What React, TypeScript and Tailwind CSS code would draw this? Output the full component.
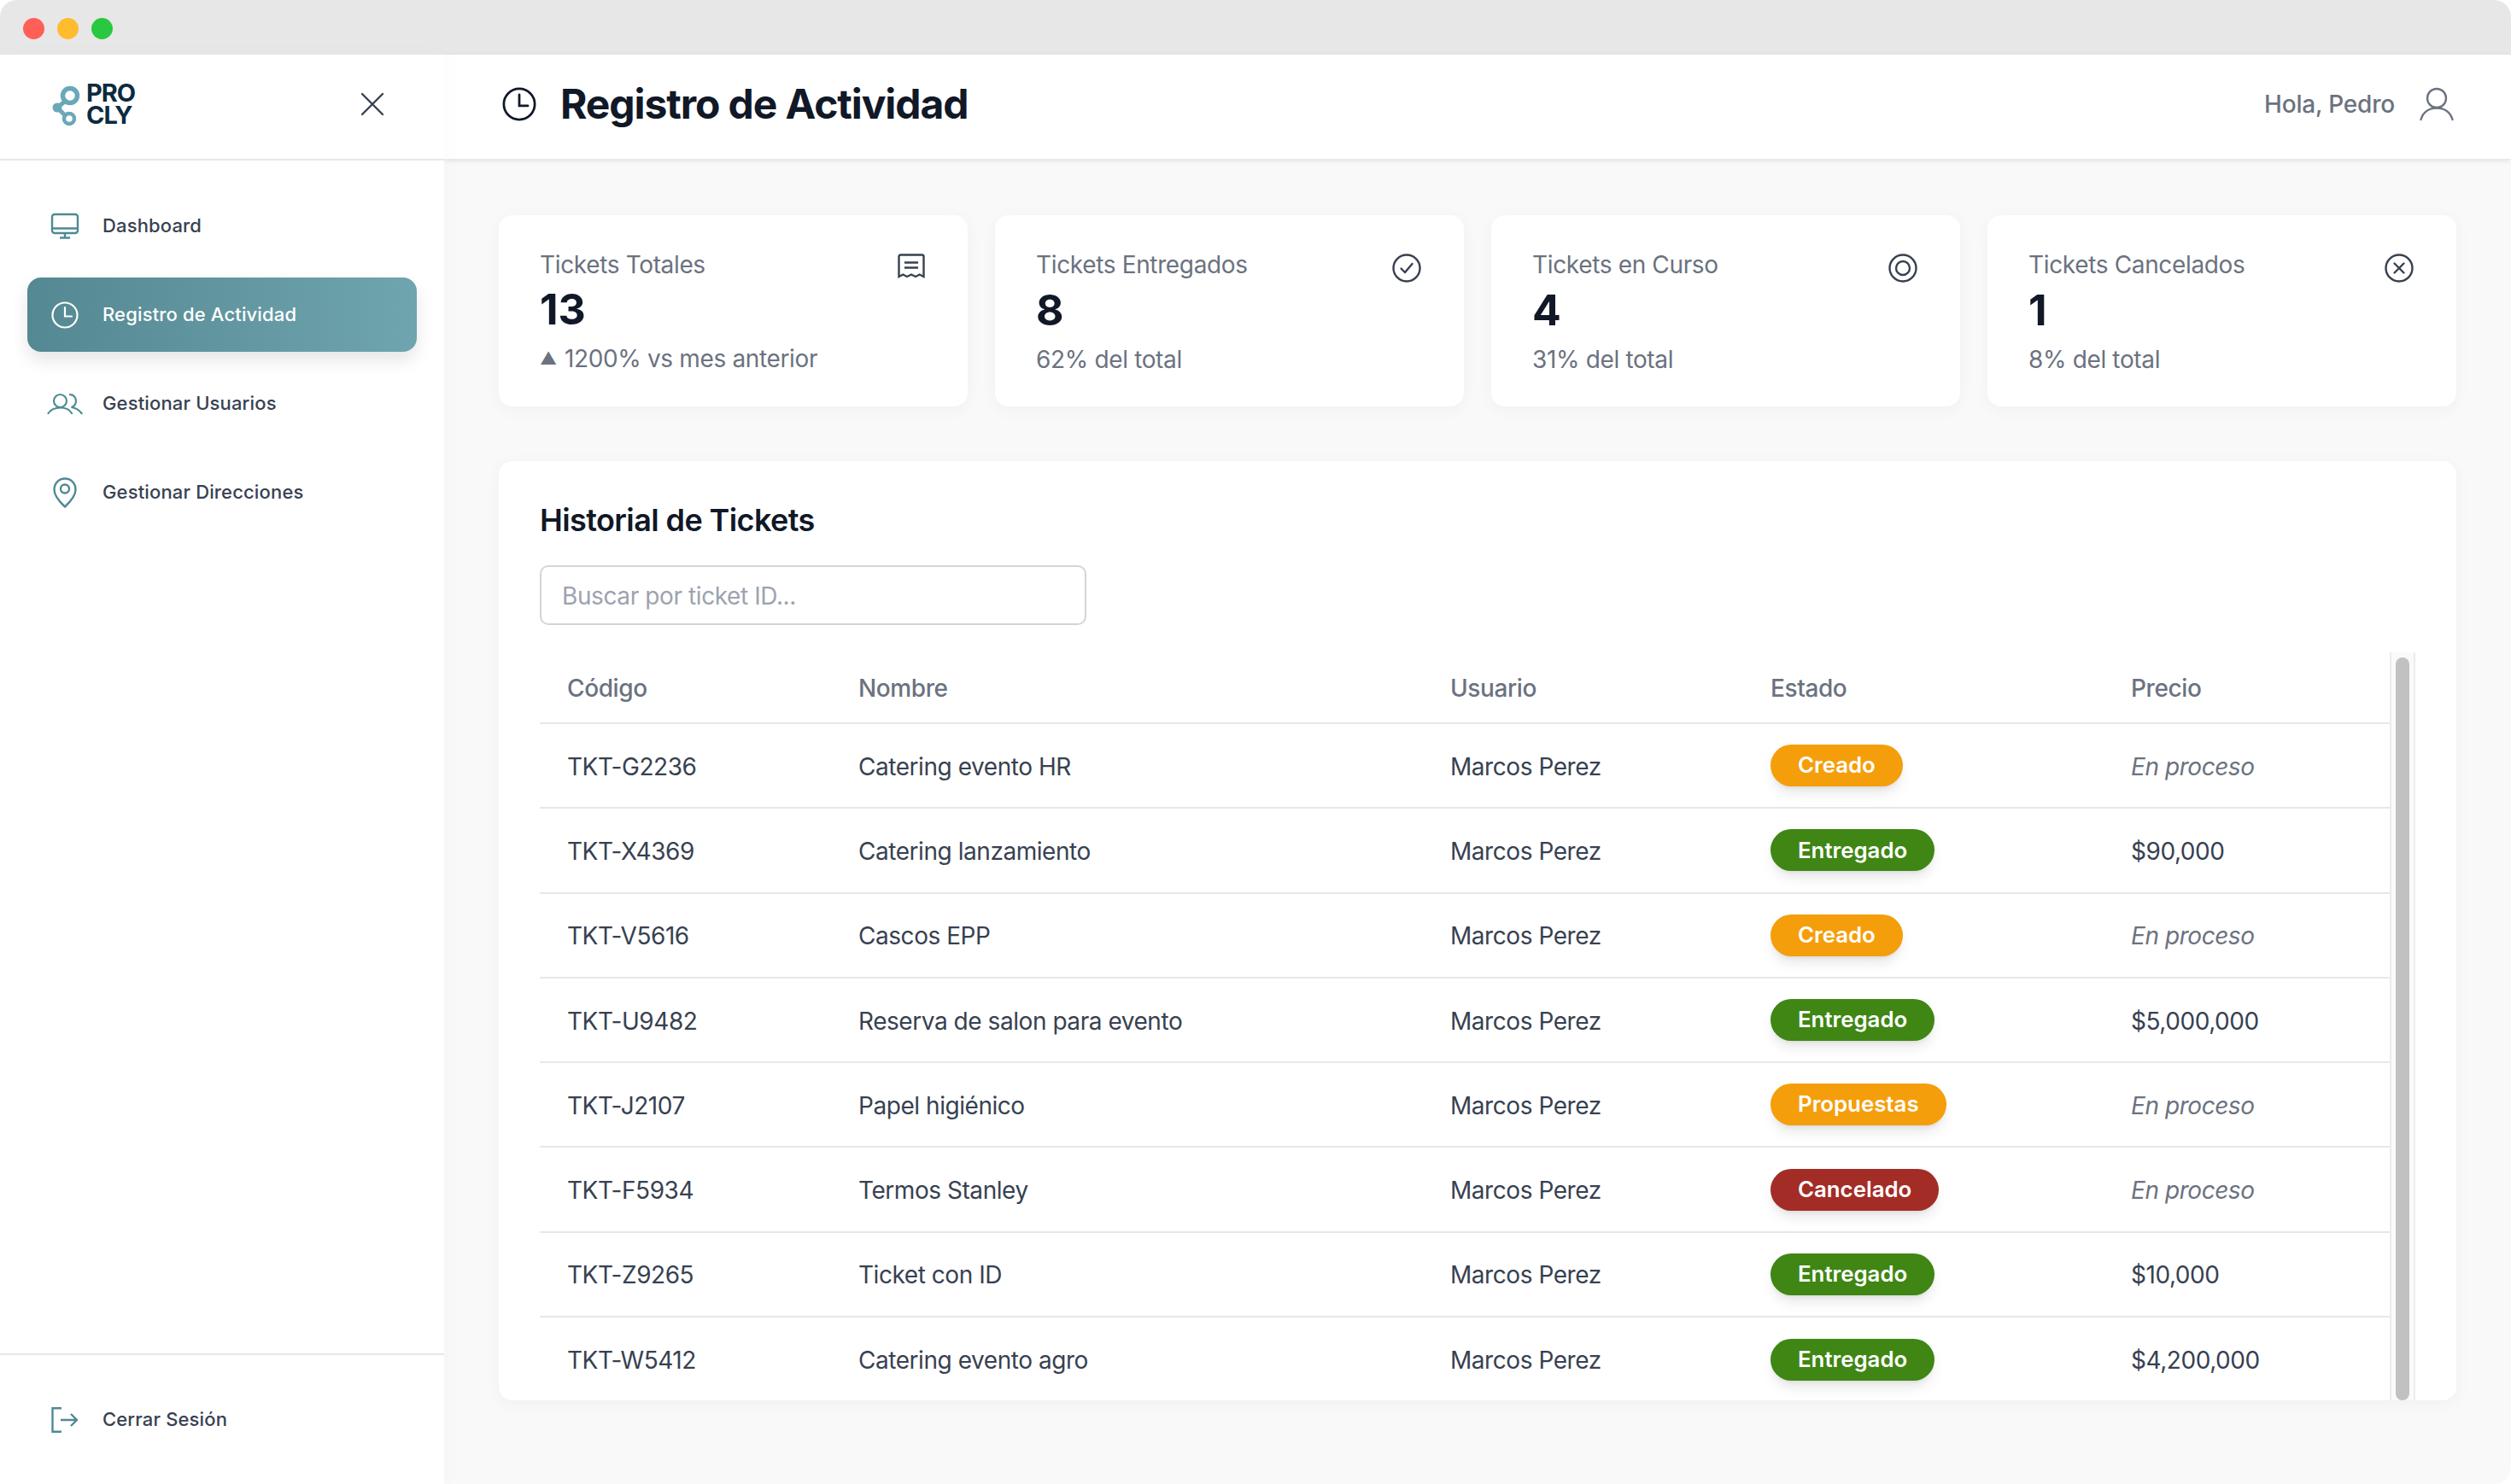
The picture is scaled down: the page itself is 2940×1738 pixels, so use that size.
import React from 'react';

const teal = '#4f8a94';

const Logo = () => (
  <svg width="34" height="50" viewBox="60 96 34 50" fill="none" stroke="#69a8b9">
    <circle cx="82" cy="111" r="8.5" strokeWidth="5.5" />
    <circle cx="81" cy="138" r="6" strokeWidth="4.5" />
    <circle cx="67" cy="125" r="5.5" fill="#69a8b9" stroke="none" />
    <path d="M67 125L77 117M67 125L76 134" strokeWidth="5" />
  </svg>
);

const MonitorIcon = () => (
  <svg width="34" height="32" viewBox="0 0 34 32" fill="none" stroke={teal} strokeWidth="2.4">
    <rect x="2" y="2" width="30" height="22" rx="3" />
    <path d="M2 18.5H32M17 24V29M11 29.5H23" />
  </svg>
);

const ClockIcon = ({ size = 32, color = 'currentColor', width = 2.2 }: { size?: number; color?: string; width?: number }) => (
  <svg width={size} height={size} viewBox="0 0 32 32" fill="none" stroke={color} strokeWidth={width} strokeLinecap="round">
    <circle cx="16" cy="16" r="14.5" />
    <path d="M16 7V17.5H24" />
  </svg>
);

const UsersIcon = () => (
  <svg width="42" height="26" viewBox="0 0 42 26" fill="none" stroke={teal} strokeWidth="2.2" strokeLinecap="round">
    <circle cx="15.5" cy="9.5" r="7.5" />
    <path d="M1.5 24C4.5 19.5 9 17.5 15.5 17.5C22 17.5 26.5 19.5 29 24" />
    <path d="M27 2.2C31 2.2 34 5.5 34 9.5C34 13 31.5 16 28.5 17C33.5 17.5 37.5 20 40.5 24" />
  </svg>
);

const PinIcon = () => (
  <svg width="28" height="36" viewBox="0 0 28 36" fill="none" stroke={teal} strokeWidth="2.4" strokeLinejoin="round">
    <path d="M14 34.5C6.5 27.5 1.5 21.5 1.5 14.5C1.5 7 7 1.5 14 1.5C21 1.5 26.5 7 26.5 14.5C26.5 21.5 21.5 27.5 14 34.5Z" />
    <circle cx="14" cy="13.5" r="5" />
  </svg>
);

const LogoutIcon = () => (
  <svg width="32" height="30" viewBox="0 0 32 30" fill="none" stroke={teal} strokeWidth="2.4">
    <path d="M12 1.2H1.5V28.8H12" />
    <path d="M11 15H30M23 8L30 15L23 22" />
  </svg>
);

const CloseIcon = () => (
  <svg width="28" height="28" viewBox="0 0 28 28" fill="none" stroke="#374151" strokeWidth="2.4" strokeLinecap="round">
    <path d="M2 2L26 26M26 2L2 26" />
  </svg>
);

const UserIcon = () => (
  <svg width="40" height="40" viewBox="0 0 40 40" fill="none" stroke="#6b7280" strokeWidth="2.4" strokeLinecap="round">
    <circle cx="20" cy="13" r="11" />
    <path d="M1.5 38C4 29.5 11 24.5 20 24.5C29 24.5 36 29.5 38.5 38" />
  </svg>
);

const ReceiptIcon = () => (
  <svg width="32" height="30" viewBox="0 0 32 30" fill="none" stroke="#374151" strokeWidth="2.4">
    <path d="M1.5 27V3.5Q1.5 1.5 3.5 1.5H28.5Q30.5 1.5 30.5 3.5V27L25.7 24.5L21 27L16 24.5L11 27L6.3 24.5Z" />
    <path d="M8 10.5H24M8 16.5H24" />
  </svg>
);

const CircleCheckIcon = () => (
  <svg width="34" height="34" viewBox="0 0 34 34" fill="none" stroke="#374151" strokeWidth="2.4" strokeLinecap="round">
    <circle cx="17" cy="17" r="15.5" />
    <path d="M10.5 17.5L15 22L23.5 12" />
  </svg>
);

const CircleTargetIcon = () => (
  <svg width="34" height="34" viewBox="0 0 34 34" fill="none" stroke="#374151" strokeWidth="2.4">
    <circle cx="17" cy="17" r="15.5" />
    <circle cx="17" cy="17" r="8" />
  </svg>
);

const CircleXIcon = () => (
  <svg width="34" height="34" viewBox="0 0 34 34" fill="none" stroke="#374151" strokeWidth="2.4" strokeLinecap="round">
    <circle cx="17" cy="17" r="15.5" />
    <path d="M11.5 11.5L22.5 22.5M22.5 11.5L11.5 22.5" />
  </svg>
);

const stats = [
  { title: 'Tickets Totales', value: '13', note: '1200% vs mes anterior', up: true, icon: <ReceiptIcon /> },
  { title: 'Tickets Entregados', value: '8', note: '62% del total', up: false, icon: <CircleCheckIcon /> },
  { title: 'Tickets en Curso', value: '4', note: '31% del total', up: false, icon: <CircleTargetIcon /> },
  { title: 'Tickets Cancelados', value: '1', note: '8% del total', up: false, icon: <CircleXIcon /> },
];

const tickets = [
  { id: 'TKT-G2236', name: 'Catering evento HR', status: 'Creado', price: '' },
  { id: 'TKT-X4369', name: 'Catering lanzamiento', status: 'Entregado', price: '$90,000' },
  { id: 'TKT-V5616', name: 'Cascos EPP', status: 'Creado', price: '' },
  { id: 'TKT-U9482', name: 'Reserva de salon para evento', status: 'Entregado', price: '$5,000,000' },
  { id: 'TKT-J2107', name: 'Papel higiénico', status: 'Propuestas', price: '' },
  { id: 'TKT-F5934', name: 'Termos Stanley', status: 'Cancelado', price: '' },
  { id: 'TKT-Z9265', name: 'Ticket con ID', status: 'Entregado', price: '$10,000' },
  { id: 'TKT-W5412', name: 'Catering evento agro', status: 'Entregado', price: '$4,200,000' },
];

const statusClass: Record<string, string> = {
  Creado: 'bg-[#f59e0b]',
  Propuestas: 'bg-[#f59e0b]',
  Entregado: 'bg-[#3f8614]',
  Cancelado: 'bg-[#a32c27]',
};

const App: React.FC = () => {
  return (
    <div className="flex h-[1738px] w-[2940px] flex-col overflow-hidden rounded-[20px] bg-[#f9f9f9] font-['Inter',sans-serif]">
      {/* Window title bar */}
      <div className="flex h-[64px] shrink-0 items-center gap-[15px] bg-[#e7e7e7] pl-[27px] pt-[3px]">
        <span className="h-[25px] w-[25px] rounded-full bg-[#ff5f57]" />
        <span className="h-[25px] w-[25px] rounded-full bg-[#febc2e]" />
        <span className="h-[25px] w-[25px] rounded-full bg-[#28c840]" />
      </div>

      <div className="flex min-h-0 flex-1">
        {/* Sidebar */}
        <aside className="z-20 flex w-[520px] shrink-0 flex-col bg-white shadow-[4px_0_24px_rgba(0,0,0,0.02)]">
          <div className="flex h-[124px] shrink-0 items-center justify-between border-b-2 border-[#e5e7eb] pb-[6px] pl-[60px] pr-[70px]">
            <div className="flex items-center gap-[7px]">
              <Logo />
              <div className="text-[29px] leading-[26px] font-bold tracking-[-1px] text-[#0b2b3f]">
                <div>PRO</div>
                <div>CLY</div>
              </div>
            </div>
            <CloseIcon />
          </div>

          <nav className="flex flex-1 flex-col gap-[17px] px-[32px] pt-[33px]">
            <a className="flex h-[87px] items-center rounded-[16px] text-[22px] font-medium tracking-[0.15px] text-[#374151]">
              <span className="flex w-[88px] shrink-0 justify-center"><MonitorIcon /></span>
              Dashboard
            </a>
            <a className="flex h-[87px] items-center rounded-[16px] bg-gradient-to-r from-[#548892] to-[#6fa5ae] text-[22px] font-medium tracking-[0.15px] text-white shadow-[0_10px_20px_rgba(0,0,0,0.1)]">
              <span className="flex w-[88px] shrink-0 justify-center"><ClockIcon color="#ffffff" /></span>
              Registro de Actividad
            </a>
            <a className="flex h-[87px] items-center rounded-[16px] text-[22px] font-medium tracking-[0.15px] text-[#374151]">
              <span className="flex w-[88px] shrink-0 justify-center"><UsersIcon /></span>
              Gestionar Usuarios
            </a>
            <a className="flex h-[87px] items-center rounded-[16px] text-[22px] font-medium tracking-[0.15px] text-[#374151]">
              <span className="flex w-[88px] shrink-0 justify-center"><PinIcon /></span>
              Gestionar Direcciones
            </a>
          </nav>

          <div className="flex h-[153px] shrink-0 items-center border-t-2 border-[#e5e7eb] px-[32px]">
            <a className="flex items-center text-[22px] font-medium tracking-[0.15px] text-[#374151]">
              <span className="flex w-[88px] shrink-0 justify-center"><LogoutIcon /></span>
              Cerrar Sesión
            </a>
          </div>
        </aside>

        <div className="flex min-w-0 flex-1 flex-col">
          {/* Top header */}
          <header className="z-10 flex h-[122px] shrink-0 items-center justify-between bg-white pb-[6px] pl-[68px] pr-[67px] shadow-[0_2px_6px_rgba(0,0,0,0.1)]">
            <div className="flex items-center gap-[28px] text-[#111827]">
              <ClockIcon size={40} color="#111827" />
              <h1 className="text-[48px] leading-none font-bold tracking-[-1.1px]">Registro de Actividad</h1>
            </div>
            <div className="flex items-center gap-[29px] text-[28px] font-medium tracking-[-0.2px] text-[#6b7280]">
              Hola, Pedro
              <UserIcon />
            </div>
          </header>

          <main className="flex min-h-0 flex-1 flex-col gap-[64px] px-[64px] pt-[66px]">
            <div className="grid grid-cols-4 gap-[32px]">
              {stats.map(s => (
                <div key={s.title} className="h-[224px] rounded-[16px] bg-white px-[48px] pt-[38px] shadow-[0_4px_20px_rgba(0,0,0,0.04)]">
                  <div className="flex items-start justify-between">
                    <div className="text-[28px] leading-[40px] tracking-[-0.35px] text-[#6b7280]">{s.title}</div>
                    <div className="mr-[2px] pt-[7px]">{s.icon}</div>
                  </div>
                  <div className="mt-[2px] text-[50px] leading-[60px] font-bold text-[#111827]">{s.value}</div>
                  <div className="mt-[8px] flex items-center text-[28px] leading-[40px] tracking-[-0.35px] text-[#6b7280]">
                    {s.up && <span className="mr-[9px] text-[20px]">▲</span>}
                    {s.note}
                  </div>
                </div>
              ))}
            </div>

            <section className="h-[1100px] overflow-hidden rounded-[16px] bg-white px-[48px] shadow-[0_4px_20px_rgba(0,0,0,0.04)]">
              <h2 className="pt-[46px] text-[36px] leading-[46px] font-semibold tracking-[-0.6px] text-[#111827]">Historial de Tickets</h2>
              <input
                type="text"
                placeholder="Buscar por ticket ID..."
                className="mt-[30px] block h-[70px] w-[640px] rounded-[10px] border-2 border-[#d1d5db] bg-white px-[24px] pt-[2px] text-[28px] tracking-[-0.4px] text-[#374151] placeholder-[#9ca3af] outline-none"
              />
              <div className="mt-[32px] flex h-[876px]">
                <div className="min-w-0 flex-1">
                  <table className="w-full table-fixed text-left">
                    <thead>
                      <tr className="h-[83px] border-b-2 border-[#e5e7eb] text-[28px] font-medium tracking-[-0.4px] text-[#6b7280]">
                        <th className="w-[341px] pl-[32px] pt-[2px] font-medium">Código</th>
                        <th className="w-[693px] pl-[32px] pt-[2px] font-medium">Nombre</th>
                        <th className="w-[375px] pl-[32px] pt-[2px] font-medium">Usuario</th>
                        <th className="w-[422px] pl-[32px] pt-[2px] font-medium">Estado</th>
                        <th className="pl-[32px] pt-[2px] font-medium">Precio</th>
                      </tr>
                    </thead>
                    <tbody>
                      {tickets.map(t => (
                        <tr key={t.id} className="h-[99.3px] border-b-2 border-[#e5e7eb] text-[28px] tracking-[-0.45px] text-[#374151] last:border-b-0">
                          <td className="pl-[32px] pt-[2px]">{t.id}</td>
                          <td className="pl-[32px] pt-[2px]">{t.name}</td>
                          <td className="pl-[32px] pt-[2px]">Marcos Perez</td>
                          <td className="pl-[32px]">
                            <span className={`inline-flex h-[49px] items-center rounded-full px-[32px] text-[25.8px] font-semibold tracking-normal text-white shadow-lg ${statusClass[t.status]}`}>
                              {t.status}
                            </span>
                          </td>
                          <td className="pl-[32px] pt-[2px]">
                            {t.price || <span className="text-[#6b7280] italic">En proceso</span>}
                          </td>
                        </tr>
                      ))}
                    </tbody>
                  </table>
                </div>
                {/* Scrollbar */}
                <div className="flex w-[30px] shrink-0 justify-center border-x-2 border-[#ececec] bg-[#fafafa] pt-[6px]">
                  <div className="h-[870px] w-[16px] rounded-full bg-[#c1c1c1]" />
                </div>
              </div>
            </section>
          </main>
        </div>
      </div>
    </div>
  );
};

export default App;
